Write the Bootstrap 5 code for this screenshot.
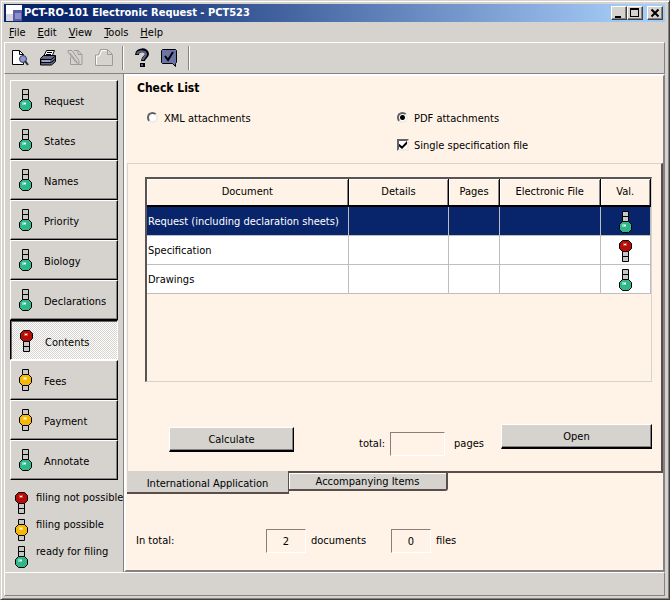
<!DOCTYPE html>
<html lang="en">
<head>
<meta charset="utf-8">
<meta name="viewport" content="width=device-width, initial-scale=1">
<title>PCT-RO-101 Electronic Request - PCT523</title>
<link href="https://cdn.jsdelivr.net/npm/bootstrap@5.3.0/dist/css/bootstrap.min.css" rel="stylesheet">
<style>
:root { --face: #d6d3ce; --paper: #fff2e6; --shade: #848284; --navy: #08246b; }
body { font: 11px/16px "DejaVu Sans Condensed", "DejaVu Sans", sans-serif; color: #000; background: var(--face); }
button, input { font: inherit; color: inherit; border-radius: 0; }
.window { border: 1px solid; border-color: #d6d3ce #424142 #424142 #d6d3ce; box-shadow: inset 1px 1px #fff, inset -1px -1px var(--shade); padding: 3px 4px 3px 3px; }
.titlebar { height: 18px; background: linear-gradient(90deg, #08246b 10%, #a5cbf7 95%); color: #fff; font-size: 11px; font-weight: bold; padding: 0 2px; }
.app-icon { margin-right: 2px; }
.wbtn { width: 16px; height: 14px; padding: 0; border: 1px solid; border-color: #fff #424142 #424142 #fff; background: var(--face); box-shadow: inset -1px -1px var(--shade); }
.menubar { height: 20px; padding: 2px 0 0 5px; gap: 12px; }
.menubar a { color: #000; text-decoration: none; }
.toolbar { height: 32px; border: 1px solid; border-color: #fff var(--shade) var(--shade) #fff; padding-left: 5px; gap: 8px; }
.toolbar button { width: 20px; height: 20px; padding: 0; border: 0; background: none; }
.toolbar svg { display: block; }
.divider { width: 2px; height: 24px; border-left: 1px solid var(--shade); border-right: 1px solid #fff; }
.sidebar { width: 120px; padding: 6px 5px 0 5px; border-left: 1px solid #fff; border-right: 1px solid var(--shade); }
.step { height: 40px; width: 108px; padding: 3px 0 0 8px; gap: 12px; text-align: left; background: var(--face); border: 1px solid; border-color: #fff #000 #000 #fff; box-shadow: inset -1px -1px var(--shade); }
.step .bulb { margin-bottom: 3px; }
.step.active { border-color: #000 #fff #fff #000; box-shadow: inset 1px 1px #636163; background: repeating-conic-gradient(#fff 0 25%, #d6d3ce 0 50%) 0 0 / 2px 2px; padding: 5px 0 0 9px; }
.legend-list { padding: 10px 0 0 5px; }
.legend-list li { height: 27px; gap: 8px; white-space: nowrap; }
.legend-list .bulb { margin-top: 2px; }
.bulb { width: 13px; height: 22px; flex: none; }
.content-pane { min-width: 0; background: var(--paper); border: 2px solid; border-color: #fff var(--shade) var(--shade) #fff; padding-left: 1px; }
.page-title { font-size: 12px; line-height: 20px; font-weight: bold; margin: 2px 0 0 10px; }
.choices { padding: 13px 16px 0 20px; height: 65px; }
.choices > div { flex: 1 1 0; }
.choices label { height: 27px; gap: 5px; display: flex; align-items: flex-start; }
.choices input { appearance: none; flex: none; width: 12px; height: 12px; margin: 1px 0 0; background-color: #fff; border: 2px solid; border-color: #636163 #efebe7 #efebe7 #636163; }
.choices input[type=radio] { border-radius: 50%; width: 11px; height: 11px; margin-right: 1px; }
.choices input[type=radio]:checked { background: radial-gradient(circle, #000 2px, #fff 3px); }
.choices input[type=checkbox]:checked::before { content: ""; display: block; width: 8px; height: 8px; background: #000; clip-path: polygon(0 35%, 38% 65%, 100% 0, 100% 38%, 38% 100%, 0 70%); }
.sheet { border: solid; border-width: 1px 2px 2px 1px; border-color: #d6d3ce #5a4d4a #5a4d4a #d6d3ce; height: 310px; padding: 13px 9px 0 17px; }
.table-well { border: solid; border-width: 2px 1px 1px 2px; border-color: #5a5552 #d6d3ce #d6d3ce #5a5552; height: 205px; }
.doc-table { width: 100%; table-layout: fixed; border-collapse: separate; border-spacing: 0; }
.doc-table th { height: 28px; padding: 0; font-weight: normal; text-align: center; border-right: 1px solid #000; border-bottom: 2px solid #000; box-shadow: inset 1px 1px #fff, inset -1px 0 var(--shade); }
.doc-table td { height: 29px; padding: 1px 0 0 1px; background: #fff; border-right: 1px solid #bdbebd; border-bottom: 1px solid #bdbebd; white-space: nowrap; }
.doc-table .selected td { background: var(--navy); color: #fff; }
.doc-table .bulb { display: block; margin: auto; }
.action-row { padding: 42px 0 0 24px; }
.push { height: 25px; padding: 1px 0 0; background: var(--face); border: solid; border-width: 1px 1px 2px 1px; border-color: #fff #000 #000 #fff; box-shadow: inset -1px -1px var(--shade); }
.calc { width: 125px; margin-top: 3px; }
.open-btn { width: 151px; }
.readout { height: 24px; padding: 0; text-align: center; background: transparent; border: 1px solid; border-color: #8c7d7b #fff #fff #8c7d7b; width: 40px; }
.total-box { width: 55px; }
.total-group { margin: 8px 0 0 48px; gap: 0 5px; }
.sheet-tab { background: var(--face); padding: 0; }
.tab-front { width: 162px; height: 23px; margin-top: -2px; border: solid #5a4d4a; border-width: 0 1px 2px 0; padding-top: 5px; z-index: 1; }
.tab-back { width: 159px; height: 18px; border: solid #5a4d4a; border-width: 0 2px 2px 0; box-shadow: inset 1px 1px #fff; padding-top: 2px; line-height: 14px; border-bottom-right-radius: 3px; }
.totals { padding: 35px 0 0 9px; gap: 5px; }
.total-label { width: 125px; }
.unit { width: 75px; }
.statusbar { height: 24px; border: 1px solid; border-color: #fff var(--shade) var(--shade) #fff; }
</style>
<script src="https://cdn.jsdelivr.net/npm/bootstrap@5.3.0/dist/js/bootstrap.bundle.min.js"></script>
</head>
<body>
<svg class="d-none">
  <symbol id="ready" viewBox="0 0 13 22"><path d="M3.500.5h6v11h-6zM3.500 5.500h6" fill="#c6c7c6" stroke="#000"/><path d="M3.500 10.500h6l3 3v5l-3 3h-6l-3-3v-5z" fill="#31b68c" stroke="#000"/><path d="M3 13h4v3H3z" fill="#7be0b8"/><path d="M5 14h2v1H5z" fill="#fff"/></symbol>
  <symbol id="blocked" viewBox="0 0 13 22"><path d="M3.500 9.500h6v12h-6zM3.500 16.500h6" fill="#c6c7c6" stroke="#000"/><path d="M3.500.5h6l3 3v5l-3 3h-6l-3-3v-5z" fill="#b50c08" stroke="#000"/><path d="M4 3h4v3H4z" fill="#e04a38"/><path d="M5 4h2v1H5z" fill="#fff"/></symbol>
  <symbol id="partial" viewBox="0 0 13 22"><path d="M3.500.5h6v21h-6z" fill="#c6c7c6" stroke="#000"/><path d="M3.500 5.500h6l3 3v5l-3 3h-6l-3-3v-5z" fill="#f7b608" stroke="#000"/><path d="M4 8h4v3H4z" fill="#ffdf50"/><path d="M5 9h2v1H5z" fill="#fff"/></symbol>
</svg>

<div class="window d-flex flex-column min-vh-100">
  <header class="titlebar d-flex align-items-center">
    <svg class="app-icon flex-shrink-0" width="16" height="16"><path d="M0 0h16v16H0z" fill="#fff"/><path d="M0 9h7v7H0z" fill="#d6d3de"/><path d="M7 5h9v11H7z" fill="#5a5da5"/><path d="M9 8h6v6H9z" fill="#8c8ec6"/></svg>
    <span class="me-auto text-nowrap">PCT-RO-101 Electronic Request - PCT523</span>
    <button class="wbtn d-flex" aria-label="Minimize"><svg width="14" height="12"><path d="M3 9h6v2H3z"/></svg></button>
    <button class="wbtn d-flex" aria-label="Maximize"><svg width="14" height="12"><path d="M2 1h9v9H2zM3 3v6h7V3z" fill-rule="evenodd"/></svg></button>
    <button class="wbtn d-flex ms-1" aria-label="Close"><svg width="14" height="12"><path d="M3.500 2.500l7 7m0-7l-7 7" stroke="#000" stroke-width="2"/></svg></button>
  </header>

  <nav class="menubar d-flex align-items-center">
    <a href="#"><u>F</u>ile</a><a href="#"><u>E</u>dit</a><a href="#"><u>V</u>iew</a><a href="#"><u>T</u>ools</a><a href="#"><u>H</u>elp</a>
  </nav>

  <div class="toolbar d-flex align-items-center">
    <button aria-label="Preview"><svg width="20" height="20" fill="none"><path d="M2.500 2.500h7l4 4v10h-11z" fill="#fff" stroke="#000"/><path d="M9.500 2.500v4h4" stroke="#000"/><circle cx="13" cy="11" r="3.500" fill="#8c9ace" stroke="#393c5a"/><path d="M15 13l3 4" stroke="#292c42" stroke-width="2"/></svg></button>
    <button aria-label="Print"><svg width="20" height="20"><path d="M5.500 8.500l3-6h8l-3 7z" fill="#fff" stroke="#000"/><path d="M9 4.500h5M8 6.500h5" stroke="#000"/><path d="M2.500 10.500l3-3h12v6l-4 3.500h-11z" fill="#63698c" stroke="#000"/><path d="M2 11.500h11l4-3M3 14.500h10l4-3" stroke="#000" fill="none"/><path d="M4 13h8" stroke="#d6dbef"/></svg></button>
    <button aria-label="Edit" disabled><svg width="20" height="20" fill="none" stroke="#9c9a9c"><path d="M8 2.500h4l4 4v10H4.500V9M12 2.500v4h4"/><path d="M2 2.500h4l7 10v3l-3-1L2 4zM4 5l7 9"/></svg></button>
    <button aria-label="New" disabled><svg width="20" height="20" fill="none"><path d="M6.500 1.500h7l5 5v11h-17V7h3z" stroke="#9c9a9c"/><path d="M13.500 2v4.500H18" stroke="#9c9a9c"/><path d="M2.500 16.500V8h3l2-5.500h5" stroke="#fff"/></svg></button>
    <span class="divider"></span>
    <button aria-label="Help"><svg width="20" height="20" fill="none"><path d="M5 7c0-6 10-6 10-1 0 3-4 3-4 7" stroke="#000" stroke-width="4"/><path d="M5 6c2-4 9-3 9 0 0 3-3 3-3 6" stroke="#5a618c" stroke-width="2"/><path d="M8 15h5v4H8z" fill="#000"/><path d="M9 16h2v2H9z" fill="#5a618c"/></svg></button>
    <button aria-label="Validate"><svg width="20" height="20"><path d="M1.500 2.500l1-1h13l1 1v12l-1 1v3l-3-3h-10l-1-1z" fill="#6b75a5" stroke="#000"/><path d="M5 8l3 4 5-8" fill="none" stroke="#000" stroke-width="2"/></svg></button>
    <span class="divider"></span>
  </div>

  <div class="d-flex flex-grow-1">
    <aside class="sidebar flex-shrink-0">
      <nav class="d-flex flex-column">
        <button class="step d-flex align-items-center"><svg class="bulb"><use href="#ready"/></svg>Request</button>
        <button class="step d-flex align-items-center"><svg class="bulb"><use href="#ready"/></svg>States</button>
        <button class="step d-flex align-items-center"><svg class="bulb"><use href="#ready"/></svg>Names</button>
        <button class="step d-flex align-items-center"><svg class="bulb"><use href="#ready"/></svg>Priority</button>
        <button class="step d-flex align-items-center"><svg class="bulb"><use href="#ready"/></svg>Biology</button>
        <button class="step d-flex align-items-center"><svg class="bulb"><use href="#ready"/></svg>Declarations</button>
        <button class="step active d-flex align-items-center" aria-current="page"><svg class="bulb"><use href="#blocked"/></svg>Contents</button>
        <button class="step d-flex align-items-center"><svg class="bulb"><use href="#partial"/></svg>Fees</button>
        <button class="step d-flex align-items-center"><svg class="bulb"><use href="#partial"/></svg>Payment</button>
        <button class="step d-flex align-items-center"><svg class="bulb"><use href="#ready"/></svg>Annotate</button>
      </nav>
      <ul class="legend-list list-unstyled mb-0">
        <li class="d-flex"><svg class="bulb"><use href="#blocked"/></svg>filing not possible</li>
        <li class="d-flex"><svg class="bulb"><use href="#partial"/></svg>filing possible</li>
        <li class="d-flex"><svg class="bulb"><use href="#ready"/></svg>ready for filing</li>
      </ul>
    </aside>

    <main class="content-pane flex-grow-1">
      <h1 class="page-title">Check List</h1>
      <div class="choices d-flex">
        <div><label for="xml"><input type="radio" name="kind" id="xml">XML attachments</label></div>
        <div>
          <label for="pdf"><input type="radio" name="kind" id="pdf" checked>PDF attachments</label>
          <label for="single"><input type="checkbox" id="single" checked>Single specification file</label>
        </div>
      </div>

      <section class="sheet">
        <div class="table-well">
          <table class="doc-table">
            <colgroup><col style="width:40%"><col style="width:20%"><col style="width:10%"><col style="width:20%"><col style="width:10%"></colgroup>
            <thead><tr><th>Document</th><th>Details</th><th>Pages</th><th>Electronic File</th><th>Val.</th></tr></thead>
            <tbody>
              <tr class="selected"><td>Request (including declaration sheets)</td><td></td><td></td><td></td><td><svg class="bulb"><use href="#ready"/></svg></td></tr>
              <tr><td>Specification</td><td></td><td></td><td></td><td><svg class="bulb"><use href="#blocked"/></svg></td></tr>
              <tr><td>Drawings</td><td></td><td></td><td></td><td><svg class="bulb"><use href="#ready"/></svg></td></tr>
            </tbody>
          </table>
        </div>
        <div class="action-row d-flex align-items-start justify-content-between">
          <button class="push calc">Calculate</button>
          <div class="total-group d-flex align-items-center">
            <label for="pages">total:</label>
            <input id="pages" class="readout total-box" readonly>
            <span class="ms-1">pages</span>
          </div>
          <button class="push open-btn">Open</button>
        </div>
      </section>
      <div class="d-flex align-items-start">
        <button class="sheet-tab tab-front position-relative">International Application</button>
        <button class="sheet-tab tab-back">Accompanying Items</button>
      </div>

      <div class="totals d-flex align-items-center">
        <span class="total-label">In total:</span>
        <input class="readout" value="2" readonly aria-label="documents">
        <span class="unit">documents</span>
        <input class="readout" value="0" readonly aria-label="files">
        <span class="unit">files</span>
      </div>
    </main>
  </div>
  <footer class="statusbar"></footer>
</div>
</body>
</html>
